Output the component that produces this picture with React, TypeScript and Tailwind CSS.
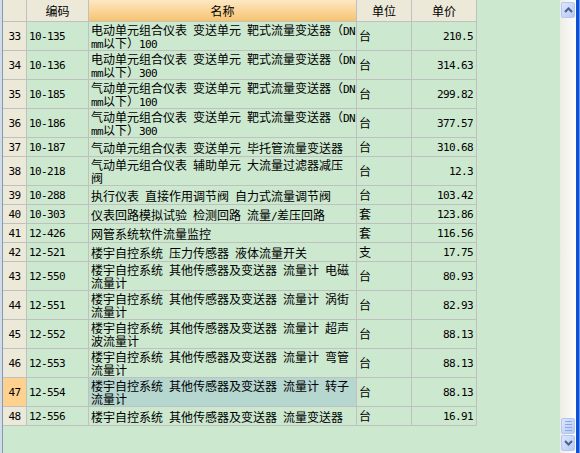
import React from "react";

type Row = { n: number; code: string; name: string[]; unit: string; price: string; sel?: boolean };

const A = "楼宇自控系统 其他传感器及变送器 流量计 ";

const rows: Row[] = [
  { n: 33, code: "10-135", name: ["电动单元组合仪表 变送单元 靶式流量变送器（DN", "mm以下）100"], unit: "台", price: "210.5" },
  { n: 34, code: "10-136", name: ["电动单元组合仪表 变送单元 靶式流量变送器（DN", "mm以下）300"], unit: "台", price: "314.63" },
  { n: 35, code: "10-185", name: ["气动单元组合仪表 变送单元 靶式流量变送器（DN", "mm以下）100"], unit: "台", price: "299.82" },
  { n: 36, code: "10-186", name: ["气动单元组合仪表 变送单元 靶式流量变送器（DN", "mm以下）300"], unit: "台", price: "377.57" },
  { n: 37, code: "10-187", name: ["气动单元组合仪表 变送单元 毕托管流量变送器"], unit: "台", price: "310.68" },
  { n: 38, code: "10-218", name: ["气动单元组合仪表 辅助单元 大流量过滤器减压", "阀"], unit: "台", price: "12.3" },
  { n: 39, code: "10-288", name: ["执行仪表 直接作用调节阀 自力式流量调节阀"], unit: "台", price: "103.42" },
  { n: 40, code: "10-303", name: ["仪表回路模拟试验 检测回路 流量/差压回路"], unit: "套", price: "123.86" },
  { n: 41, code: "12-426", name: ["网管系统软件流量监控"], unit: "套", price: "116.56" },
  { n: 42, code: "12-521", name: ["楼宇自控系统 压力传感器 液体流量开关"], unit: "支", price: "17.75" },
  { n: 43, code: "12-550", name: [A + "电磁", "流量计"], unit: "台", price: "80.93" },
  { n: 44, code: "12-551", name: [A + "涡街", "流量计"], unit: "台", price: "82.93" },
  { n: 45, code: "12-552", name: [A + "超声", "波流量计"], unit: "台", price: "88.13" },
  { n: 46, code: "12-553", name: [A + "弯管", "流量计"], unit: "台", price: "88.13" },
  { n: 47, code: "12-554", name: [A + "转子", "流量计"], unit: "台", price: "88.13", sel: true },
  { n: 48, code: "12-556", name: ["楼宇自控系统 其他传感器及变送器 流量变送器"], unit: "台", price: "16.91" },
];

function T({ s }: { s: string }) {
  const parts = s.split(/([\x20-\x7e]+)/).filter((p) => p.length > 0);
  return (
    <>
      {parts.map((p, i) =>
        /^[\x20-\x7e]+$/.test(p) ? (
          <span key={i} className="font-['DejaVu_Sans_Mono',monospace] text-[11px] tracking-[-0.62px] leading-none whitespace-pre">
            {p}
          </span>
        ) : (
          <span key={i}>{p}</span>
        )
      )}
    </>
  );
}

function Chevron({ up }: { up: boolean }) {
  return (
    <svg width="9" height="6" viewBox="0 0 9 6">
      <polyline
        points={up ? "1,5 4.5,1.5 8,5" : "1,1 4.5,4.5 8,1"}
        fill="none"
        stroke="#4d6185"
        strokeWidth="2"
      />
    </svg>
  );
}

function SbButton({ children }: { children: React.ReactNode }) {
  return (
    <div className="mx-[1px] h-[16px] w-[14px] rounded-[2px] border border-[#b4c6f2] bg-linear-to-br from-[#dce6fd] to-[#b6c9f6] flex items-center justify-center">
      {children}
    </div>
  );
}

export default function App() {
  const line = "border-[#c0c0c0]";
  return (
    <div className="w-[580px] h-[453px] flex bg-[#cce8cf] overflow-hidden font-['Noto_Sans_CJK_SC',sans-serif] text-[12px] text-black">
      <div className="w-[3px] h-full bg-[#d3dbe7] border-r border-[#7f9db9]" />
      <div className="flex-1 flex flex-col">
        <div className="flex h-[22px]">
          <div className={`w-[24px] h-full border-r border-b ${line} bg-[#ece9d8]`} />
          <div className={`w-[62px] h-full border-r border-b ${line} bg-[#ece9d8] flex items-center justify-center`}>编码</div>
          <div className={`w-[268px] h-full border-r border-b ${line} bg-linear-to-b from-[#fde8c2] to-[#f6c36e] flex items-center justify-center`}>名称</div>
          <div className={`w-[55px] h-full border-r border-b ${line} bg-[#ece9d8] flex items-center justify-center`}>单位</div>
          <div className={`w-[65px] h-full border-r border-b ${line} bg-[#ece9d8] flex items-center justify-center`}>单价</div>
        </div>
        {rows.map((r) => {
          const h = r.name.length > 1 ? "h-[29px]" : "h-[19px]";
          return (
            <div key={r.n} className={`flex ${h}`}>
              <div
                className={`w-[24px] h-full border-r border-b ${line} ${r.sel ? "bg-[#ffd18f]" : "bg-[#ece9d8]"} flex items-center justify-center`}
              >
                <T s={String(r.n)} />
              </div>
              <div className={`w-[62px] h-full border-r border-b ${line} flex items-center pl-[2px]`}>
                <T s={r.code} />
              </div>
              <div
                className={`w-[268px] h-full border-r border-b ${line} ${r.sel ? "bg-[#b6d6d0]" : ""} flex items-center pl-[2px]`}
              >
                <div className="leading-[13px] whitespace-nowrap">
                  {r.name.map((l, i) => (
                    <div key={i} className="h-[13px]">
                      <T s={l} />
                    </div>
                  ))}
                </div>
              </div>
              <div className={`w-[55px] h-full border-r border-b ${line} flex items-center pl-[2px]`}>{r.unit}</div>
              <div className={`w-[65px] h-full border-r border-b ${line} flex items-center justify-end pr-[3px]`}>
                <T s={r.price} />
              </div>
            </div>
          );
        })}
      </div>
      <div className="w-[16px] h-full flex flex-col justify-between py-[2px] bg-linear-to-r from-[#eeede5] to-[#fdfdfb]">
        <SbButton>
          <Chevron up />
        </SbButton>
        <div className="flex flex-col">
          <SbButton>
            <div className="flex flex-col gap-[2px]">
              <div className="w-[7px] h-[1px] bg-[#8ca6e0]" />
              <div className="w-[7px] h-[1px] bg-[#8ca6e0]" />
              <div className="w-[7px] h-[1px] bg-[#8ca6e0]" />
              <div className="w-[7px] h-[1px] bg-[#8ca6e0]" />
            </div>
          </SbButton>
          <div className="h-[1px]" />
          <SbButton>
            <Chevron up={false} />
          </SbButton>
        </div>
      </div>
      <div className="w-[3px] h-full bg-[#0b4fdc]" />
      <div className="w-[1px] h-full bg-[#6c93ea]" />
    </div>
  );
}
